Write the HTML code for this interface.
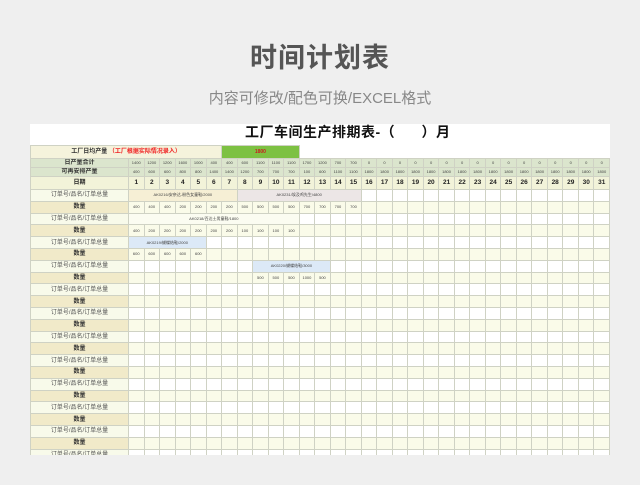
<!DOCTYPE html>
<html><head><meta charset="utf-8"><style>
html,body{margin:0;padding:0;width:640px;height:485px;overflow:hidden;background:#efefef;font-family:"Liberation Sans","Noto Sans CJK SC",sans-serif}
.h1{position:absolute;left:0;width:640px;top:36px;text-align:center;font-size:27px;color:#555;font-weight:bold;letter-spacing:1px}
.h2{position:absolute;left:0;width:640px;top:87px;text-align:center;font-size:15px;color:#888}
.sheet{position:absolute;left:30px;top:124px;width:580px;height:331px;background:#fff;overflow:hidden}
.t1{position:absolute;left:215px;top:-2px;font-size:14px;font-weight:bold;color:#111;white-space:pre;letter-spacing:0.5px}
.note{position:absolute;left:372px;top:23px;font-size:8px;font-weight:bold;color:#f01c1c}
table{position:absolute;left:0;top:21px;width:580px;border-collapse:collapse;table-layout:fixed}
td{border:1px solid #cfd2c4;padding:0;text-align:center;font-size:4px;color:#444;overflow:hidden;white-space:nowrap;line-height:1}
.lab{font-size:6px;color:#333}
.r0 td{height:12px}
.g td{background:#dbe5cd;height:8px}
.d td{background:#f2f3d9;height:12px;font-size:6.5px;font-weight:bold;color:#222}
.o td{height:10.8px;background:#fff}
.o td.lab{background:#f8faea;color:#555;font-size:6px}
.q td{height:10.8px;background:#fafbe9}
.q td.lab{background:#f1eac9;font-size:6px;font-weight:bold;color:#333}
</style></head><body>
<div class="h1">时间计划表</div>
<div class="h2">内容可修改/配色可换/EXCEL格式</div>
<div class="sheet">
<div class="t1">工厂车间生产排期表-（      ）月</div>
<div class="note">注意！车间休息日不要排货期</div>
<table>
<colgroup><col style="width:98px"><col span="31"></colgroup>
<tr class="r0"><td colspan="7" style="background:#f5f3dc;font-size:6px;font-weight:bold;color:#333">工厂日均产量 <span style="color:#f02020">（工厂根据实际情况录入）</span></td><td colspan="5" style="background:#7dc142;color:#c82020;font-size:5px;font-weight:bold">1800</td><td colspan="20" style="border:none;background:#fff"></td></tr>
<tr class="g"><td class="lab" style="font-weight:bold">日产量合计</td><td>1400</td><td>1200</td><td>1200</td><td>1600</td><td>1000</td><td>400</td><td>400</td><td>600</td><td>1100</td><td>1100</td><td>1100</td><td>1700</td><td>1200</td><td>700</td><td>700</td><td>0</td><td>0</td><td>0</td><td>0</td><td>0</td><td>0</td><td>0</td><td>0</td><td>0</td><td>0</td><td>0</td><td>0</td><td>0</td><td>0</td><td>0</td><td>0</td></tr>
<tr class="g"><td class="lab" style="font-weight:bold">可再安排产量</td><td>400</td><td>600</td><td>600</td><td>800</td><td>800</td><td>1400</td><td>1400</td><td>1200</td><td>700</td><td>700</td><td>700</td><td>100</td><td>600</td><td>1100</td><td>1100</td><td>1800</td><td>1800</td><td>1800</td><td>1800</td><td>1800</td><td>1800</td><td>1800</td><td>1800</td><td>1800</td><td>1800</td><td>1800</td><td>1800</td><td>1800</td><td>1800</td><td>1800</td><td>1800</td></tr>
<tr class="d"><td style="font-size:6px">日期</td><td>1</td><td>2</td><td>3</td><td>4</td><td>5</td><td>6</td><td>7</td><td>8</td><td>9</td><td>10</td><td>11</td><td>12</td><td>13</td><td>14</td><td>15</td><td>16</td><td>17</td><td>18</td><td>19</td><td>20</td><td>21</td><td>22</td><td>23</td><td>24</td><td>25</td><td>26</td><td>27</td><td>28</td><td>29</td><td>30</td><td>31</td></tr>
<tr class="o"><td class="lab">订单号/品名/订单总量</td><td colspan="7" style="background:#f6efd5">AK0216/安奈达-粉色女童鞋/2000</td><td colspan="8" style="background:#ece6e6">AK0231/埃及鸡先生/4800</td><td></td><td></td><td></td><td></td><td></td><td></td><td></td><td></td><td></td><td></td><td></td><td></td><td></td><td></td><td></td><td></td></tr>
<tr class="q"><td class="lab">数量</td><td>400</td><td>400</td><td>400</td><td>200</td><td>200</td><td>200</td><td>200</td><td>500</td><td>500</td><td>500</td><td>500</td><td>700</td><td>700</td><td>700</td><td>700</td><td></td><td></td><td></td><td></td><td></td><td></td><td></td><td></td><td></td><td></td><td></td><td></td><td></td><td></td><td></td><td></td></tr>
<tr class="o"><td class="lab">订单号/品名/订单总量</td><td colspan="11" style="background:#fbfcf1">AK0218/百达士男童鞋/1800</td><td></td><td></td><td></td><td></td><td></td><td></td><td></td><td></td><td></td><td></td><td></td><td></td><td></td><td></td><td></td><td></td><td></td><td></td><td></td><td></td></tr>
<tr class="q"><td class="lab">数量</td><td>400</td><td>200</td><td>200</td><td>200</td><td>200</td><td>200</td><td>200</td><td>100</td><td>100</td><td>100</td><td>100</td><td></td><td></td><td></td><td></td><td></td><td></td><td></td><td></td><td></td><td></td><td></td><td></td><td></td><td></td><td></td><td></td><td></td><td></td><td></td><td></td></tr>
<tr class="o"><td class="lab">订单号/品名/订单总量</td><td colspan="5" style="background:#dce9f7">AK0219/蝴蝶结鞋/2000</td><td></td><td></td><td></td><td></td><td></td><td></td><td></td><td></td><td></td><td></td><td></td><td></td><td></td><td></td><td></td><td></td><td></td><td></td><td></td><td></td><td></td><td></td><td></td><td></td><td></td><td></td></tr>
<tr class="q"><td class="lab">数量</td><td>600</td><td>600</td><td>600</td><td>600</td><td>600</td><td></td><td></td><td></td><td></td><td></td><td></td><td></td><td></td><td></td><td></td><td></td><td></td><td></td><td></td><td></td><td></td><td></td><td></td><td></td><td></td><td></td><td></td><td></td><td></td><td></td><td></td></tr>
<tr class="o"><td class="lab">订单号/品名/订单总量</td><td></td><td></td><td></td><td></td><td></td><td></td><td></td><td></td><td colspan="5" style="background:#dce9f7">AK0220/蝴蝶结鞋/3000</td><td></td><td></td><td></td><td></td><td></td><td></td><td></td><td></td><td></td><td></td><td></td><td></td><td></td><td></td><td></td><td></td><td></td><td></td></tr>
<tr class="q"><td class="lab">数量</td><td></td><td></td><td></td><td></td><td></td><td></td><td></td><td></td><td>500</td><td>500</td><td>500</td><td>1000</td><td>500</td><td></td><td></td><td></td><td></td><td></td><td></td><td></td><td></td><td></td><td></td><td></td><td></td><td></td><td></td><td></td><td></td><td></td><td></td></tr>
<tr class="o"><td class="lab">订单号/品名/订单总量</td><td></td><td></td><td></td><td></td><td></td><td></td><td></td><td></td><td></td><td></td><td></td><td></td><td></td><td></td><td></td><td></td><td></td><td></td><td></td><td></td><td></td><td></td><td></td><td></td><td></td><td></td><td></td><td></td><td></td><td></td><td></td></tr>
<tr class="q"><td class="lab">数量</td><td></td><td></td><td></td><td></td><td></td><td></td><td></td><td></td><td></td><td></td><td></td><td></td><td></td><td></td><td></td><td></td><td></td><td></td><td></td><td></td><td></td><td></td><td></td><td></td><td></td><td></td><td></td><td></td><td></td><td></td><td></td></tr>
<tr class="o"><td class="lab">订单号/品名/订单总量</td><td></td><td></td><td></td><td></td><td></td><td></td><td></td><td></td><td></td><td></td><td></td><td></td><td></td><td></td><td></td><td></td><td></td><td></td><td></td><td></td><td></td><td></td><td></td><td></td><td></td><td></td><td></td><td></td><td></td><td></td><td></td></tr>
<tr class="q"><td class="lab">数量</td><td></td><td></td><td></td><td></td><td></td><td></td><td></td><td></td><td></td><td></td><td></td><td></td><td></td><td></td><td></td><td></td><td></td><td></td><td></td><td></td><td></td><td></td><td></td><td></td><td></td><td></td><td></td><td></td><td></td><td></td><td></td></tr>
<tr class="o"><td class="lab">订单号/品名/订单总量</td><td></td><td></td><td></td><td></td><td></td><td></td><td></td><td></td><td></td><td></td><td></td><td></td><td></td><td></td><td></td><td></td><td></td><td></td><td></td><td></td><td></td><td></td><td></td><td></td><td></td><td></td><td></td><td></td><td></td><td></td><td></td></tr>
<tr class="q"><td class="lab">数量</td><td></td><td></td><td></td><td></td><td></td><td></td><td></td><td></td><td></td><td></td><td></td><td></td><td></td><td></td><td></td><td></td><td></td><td></td><td></td><td></td><td></td><td></td><td></td><td></td><td></td><td></td><td></td><td></td><td></td><td></td><td></td></tr>
<tr class="o"><td class="lab">订单号/品名/订单总量</td><td></td><td></td><td></td><td></td><td></td><td></td><td></td><td></td><td></td><td></td><td></td><td></td><td></td><td></td><td></td><td></td><td></td><td></td><td></td><td></td><td></td><td></td><td></td><td></td><td></td><td></td><td></td><td></td><td></td><td></td><td></td></tr>
<tr class="q"><td class="lab">数量</td><td></td><td></td><td></td><td></td><td></td><td></td><td></td><td></td><td></td><td></td><td></td><td></td><td></td><td></td><td></td><td></td><td></td><td></td><td></td><td></td><td></td><td></td><td></td><td></td><td></td><td></td><td></td><td></td><td></td><td></td><td></td></tr>
<tr class="o"><td class="lab">订单号/品名/订单总量</td><td></td><td></td><td></td><td></td><td></td><td></td><td></td><td></td><td></td><td></td><td></td><td></td><td></td><td></td><td></td><td></td><td></td><td></td><td></td><td></td><td></td><td></td><td></td><td></td><td></td><td></td><td></td><td></td><td></td><td></td><td></td></tr>
<tr class="q"><td class="lab">数量</td><td></td><td></td><td></td><td></td><td></td><td></td><td></td><td></td><td></td><td></td><td></td><td></td><td></td><td></td><td></td><td></td><td></td><td></td><td></td><td></td><td></td><td></td><td></td><td></td><td></td><td></td><td></td><td></td><td></td><td></td><td></td></tr>
<tr class="o"><td class="lab">订单号/品名/订单总量</td><td></td><td></td><td></td><td></td><td></td><td></td><td></td><td></td><td></td><td></td><td></td><td></td><td></td><td></td><td></td><td></td><td></td><td></td><td></td><td></td><td></td><td></td><td></td><td></td><td></td><td></td><td></td><td></td><td></td><td></td><td></td></tr>
<tr class="q"><td class="lab">数量</td><td></td><td></td><td></td><td></td><td></td><td></td><td></td><td></td><td></td><td></td><td></td><td></td><td></td><td></td><td></td><td></td><td></td><td></td><td></td><td></td><td></td><td></td><td></td><td></td><td></td><td></td><td></td><td></td><td></td><td></td><td></td></tr>
<tr class="o"><td class="lab">订单号/品名/订单总量</td><td></td><td></td><td></td><td></td><td></td><td></td><td></td><td></td><td></td><td></td><td></td><td></td><td></td><td></td><td></td><td></td><td></td><td></td><td></td><td></td><td></td><td></td><td></td><td></td><td></td><td></td><td></td><td></td><td></td><td></td><td></td></tr>
<tr class="q"><td class="lab">数量</td><td></td><td></td><td></td><td></td><td></td><td></td><td></td><td></td><td></td><td></td><td></td><td></td><td></td><td></td><td></td><td></td><td></td><td></td><td></td><td></td><td></td><td></td><td></td><td></td><td></td><td></td><td></td><td></td><td></td><td></td><td></td></tr>
<tr class="o"><td class="lab">订单号/品名/订单总量</td><td></td><td></td><td></td><td></td><td></td><td></td><td></td><td></td><td></td><td></td><td></td><td></td><td></td><td></td><td></td><td></td><td></td><td></td><td></td><td></td><td></td><td></td><td></td><td></td><td></td><td></td><td></td><td></td><td></td><td></td><td></td></tr>
</table>
</div>
</body></html>
